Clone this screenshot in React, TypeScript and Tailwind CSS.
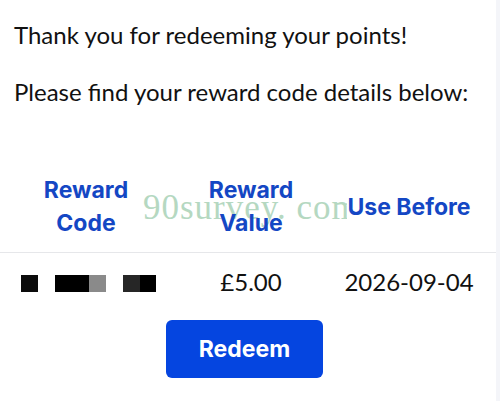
import React from "react";

const headers = [
  ["Reward", "Code"],
  ["Reward", "Value"],
  ["Use Before"],
];

const Redacted = () => (
  <div className="flex items-center pt-[3px]">
    <span className="ml-[21px] h-[17px] w-[17px] bg-[#0b0b0b]" />
    <span className="ml-[17px] h-[17px] w-[34px] bg-black" />
    <span className="h-[17px] w-[17px] bg-[#8a8a8a]" />
    <span className="ml-[17px] h-[17px] w-[17px] bg-[#262626]" />
    <span className="h-[17px] w-[16px] bg-black" />
  </div>
);

export default function App() {
  return (
    <div className="relative h-[401px] w-[500px] overflow-hidden bg-white font-['Lato',sans-serif]">
      <div className="absolute right-0 top-0 h-full w-[4px] bg-[#f4f5f9]" />
      <div className="pt-[20px] pl-[14px] text-[24px] leading-[30px] text-[#111]">
        <p>Thank you for redeeming your points!</p>
        <p className="mt-[27px]">Please find your reward code details below:</p>
      </div>

      <div className="mt-[61px] w-[496px]">
        <div className="grid h-[85px] grid-cols-[172px_158px_158px] items-center border-b border-[#e6e7ea] pb-[6px] font-['Inter',sans-serif] text-[23px] font-bold leading-[33px] text-[#1447c4]">
          {headers.map((h, i) => (
            <div key={i} className="relative z-10 text-center">
              {h.map((l) => (
                <div key={l}>
                  <span className={i === 2 ? "bg-white" : ""}>{l}</span>
                </div>
              ))}
            </div>
          ))}
        </div>
        <div className="grid h-[58px] grid-cols-[172px_158px_158px] items-center text-[24px] text-[#111]">
          <Redacted />
          <div className="text-center">£5.00</div>
          <div className="text-center">2026-09-04</div>
        </div>
      </div>

      <div className="flex justify-center pr-[11px] pt-[9px]">
        <button className="h-[58px] w-[157px] rounded-[6px] bg-[#0545e0] font-['Inter',sans-serif] text-[23px] font-bold text-white">
          Redeem
        </button>
      </div>

      <div className="pointer-events-none absolute left-[143px] top-[182px] font-['Liberation_Serif',serif] text-[35px] tracking-[1px] text-[#a3cfb2] opacity-80">
        90survey. com
      </div>
    </div>
  );
}
